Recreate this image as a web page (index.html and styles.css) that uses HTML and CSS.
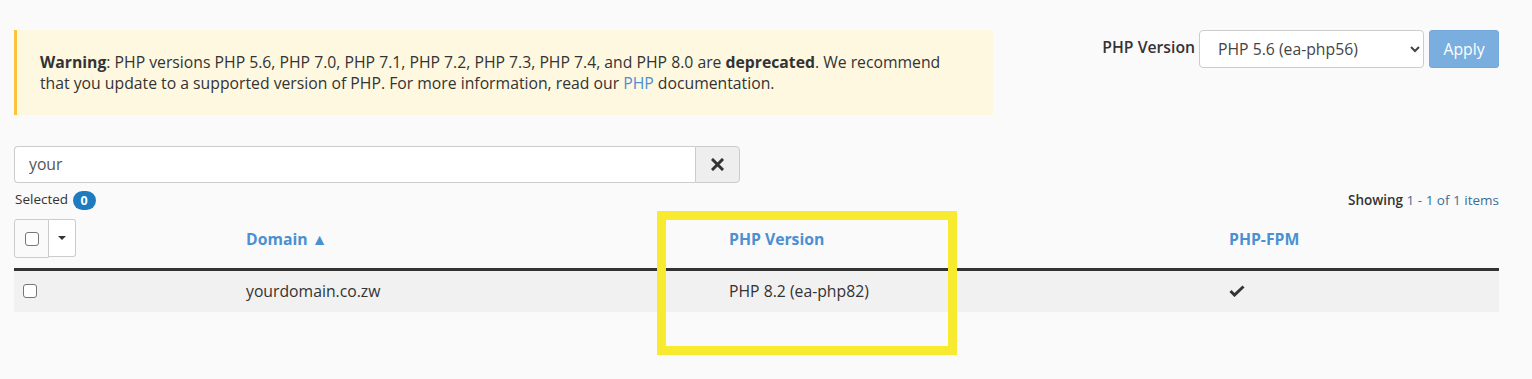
FILE: index.html
```html
<!DOCTYPE html>
<html lang="en">
<head>
  <meta charset="UTF-8">
  <title>MultiPHP Manager</title>
  <link rel="stylesheet" href="styles.css">
</head>
<body>
  <div class="page">
    <div class="top">
      <div class="alert-warning">
        <strong>Warning</strong>: PHP versions PHP 5.6, PHP 7.0, PHP 7.1, PHP 7.2, PHP 7.3, PHP 7.4, and PHP 8.0 are <strong>deprecated</strong>. We recommend that you update to a supported version of PHP. For more information, read our <a href="#">PHP</a> documentation.
      </div>
      <form class="version-form">
        <label for="phpVersion">PHP Version</label>
        <select id="phpVersion" class="form-select">
          <option>PHP 5.6 (ea-php56)</option>
        </select>
        <button type="button" class="btn-apply">Apply</button>
      </form>
    </div>

    <div class="search-group">
      <input type="text" class="search-input" value="your">
      <button type="button" class="btn-clear">
        <svg width="13" height="13" viewBox="0 0 13 13"><path d="M2 2 L11 11 M11 2 L2 11" stroke="#333" stroke-width="3" stroke-linecap="square"/></svg>
      </button>
    </div>

    <div class="list-info">
      <div>Selected <span class="badge">0</span></div>
      <div><span class="strong">Showing</span> <span class="muted">1 - 1 of 1 items</span></div>
    </div>

    <div class="table-wrap">
      <table class="domains">
        <thead>
          <tr>
            <th class="col-check">
              <div class="check-group">
                <span class="check-box"><span class="fake-check"></span></span>
                <span class="check-caret"><svg width="8" height="4" viewBox="0 0 8 4"><path d="M0 0 L8 0 L4 4 Z" fill="#333"/></svg></span>
              </div>
            </th>
            <th class="col-domain"><a href="#">Domain ▲</a></th>
            <th class="col-version"><a href="#">PHP Version</a></th>
            <th class="col-fpm"><a href="#">PHP-FPM</a></th>
          </tr>
        </thead>
        <tbody>
          <tr>
            <td class="col-check"><span class="fake-check"></span></td>
            <td>yourdomain.co.zw</td>
            <td>PHP 8.2 (ea-php82)</td>
            <td>
              <svg width="16" height="12" viewBox="0 0 16 12"><path d="M1.5 6 L5.5 10 L14.5 1.5" fill="none" stroke="#333" stroke-width="3"/></svg>
            </td>
          </tr>
        </tbody>
      </table>
      <div class="highlight"></div>
    </div>
  </div>
</body>
</html>
```

FILE: styles.css
```css
:root {
  --page-bg: #fafafa;
  --text-color: #333333;
  --link-color: #4a90d2;
  --border-color: #cccccc;
  --warning-bg: #fef8e1;
  --warning-border: #fcc43c;
}

* {
  margin: 0;
  padding: 0;
  box-sizing: border-box;
}

html,
body {
  background-color: var(--page-bg);
}

body {
  font-family: "Open Sans", "Noto Sans", sans-serif;
  font-size: 15.75px;
  color: var(--text-color);
}

.page {
  min-height: 379px;
  padding: 30px 33px 0 14px;
}

/* Top area */
.top {
  display: flex;
  justify-content: space-between;
  align-items: flex-start;
}

.alert-warning {
  width: 979px;
  height: 85px;
  background-color: var(--warning-bg);
  border-left: 3px solid var(--warning-border);
  padding: 22px 36px 0 23px;
  font-size: 15.75px;
  line-height: 21px;
}

.alert-warning a {
  color: var(--link-color);
  text-decoration: none;
}

.version-form {
  display: flex;
  align-items: center;
  height: 38px;
}

.version-form label {
  font-weight: 600;
  font-size: 15.75px;
  margin-right: 4px;
  padding-bottom: 4px;
}

.form-select {
  width: 225px;
  height: 38px;
  font-family: inherit;
  font-size: 15.75px;
  color: #444;
  background-color: #fff;
  border: 1px solid var(--border-color);
  border-radius: 4px;
  padding: 0 14px;
}

.btn-apply {
  width: 70px;
  height: 38px;
  margin-left: 5px;
  background-color: #7aaede;
  color: #fff;
  border: 1px solid #74a8da;
  border-radius: 3px;
  font-family: inherit;
  font-size: 15.75px;
}

/* Search */
.search-group {
  display: flex;
  width: 726px;
  margin-top: 31px;
  height: 37px;
}

.search-input {
  flex: 1;
  font-family: inherit;
  font-size: 15.75px;
  color: #555;
  background: #fff;
  border: 1px solid var(--border-color);
  border-right: none;
  border-radius: 4px 0 0 4px;
  padding: 0 14px 2px;
}

.btn-clear {
  width: 45px;
  background-color: #eeeeee;
  border: 1px solid var(--border-color);
  border-radius: 0 4px 4px 0;
  display: flex;
  align-items: center;
  justify-content: center;
}

/* Info row */
.list-info {
  display: flex;
  justify-content: space-between;
  align-items: center;
  margin-top: 6px;
  height: 22px;
  font-size: 13.5px;
  padding-left: 1px;
}

.list-info .strong {
  font-weight: 600;
}

.list-info .muted {
  color: #3f6d96;
}

.badge {
  display: inline-block;
  min-width: 23px;
  height: 19px;
  line-height: 19px;
  border-radius: 10px;
  background-color: #1f7bbf;
  color: #fff;
  font-weight: 700;
  font-size: 12.5px;
  text-align: center;
  vertical-align: middle;
  margin-left: 1px;
}

/* Table */
.table-wrap {
  position: relative;
  margin-top: 8px;
}

.domains {
  width: 100%;
  border-collapse: collapse;
  font-size: 15.75px;
}

.domains th {
  text-align: left;
  font-weight: 700;
  line-height: 20px;
  padding: 10px 0 19px;
  border-bottom: 3px solid #333;
  vertical-align: top;
}

.domains th a {
  color: var(--link-color);
  text-decoration: none;
}

.domains th.col-check {
  padding: 0;
}

.domains td {
  height: 42px;
  background-color: #f1f1f1;
  vertical-align: middle;
  padding-bottom: 1px;
}

.col-check { width: 232px; }
.col-domain { width: 483px; }
.col-version { width: 500px; }

.domains td.col-check {
  padding-left: 9px;
}

.check-group {
  display: flex;
  width: 62px;
  height: 39px;
}

.check-box {
  width: 35px;
  border: 1px solid var(--border-color);
  border-radius: 3px 0 0 3px;
  display: flex;
  align-items: center;
  justify-content: center;
  background: #fafafa;
}

.check-caret {
  width: 27px;
  border: 1px solid var(--border-color);
  border-left: none;
  border-radius: 0 3px 3px 0;
  display: flex;
  align-items: center;
  justify-content: center;
  background: #fff;
  height: 38px;
}

.fake-check {
  display: block;
  width: 14px;
  height: 14px;
  border: 1px solid #767676;
  border-radius: 3px;
  background: #fff;
}

/* Highlight overlay */
.highlight {
  position: absolute;
  left: 643px;
  top: -8px;
  width: 300px;
  height: 144px;
  border: 9px solid #f8ea2e;
  pointer-events: none;
}
```
